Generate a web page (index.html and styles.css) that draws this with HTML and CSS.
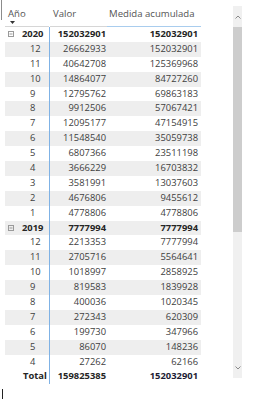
FILE: index.html
```html
<!DOCTYPE html>
<html>
<head>
<meta charset="utf-8">
<link rel="stylesheet" href="styles.css">
</head>
<body>
<div class="visual">
  <div class="edge-top"></div>
  <div class="matrix">
    <div class="head">
      <div class="c1 h"><span>Año</span><svg class="sort" width="5" height="3" viewBox="0 0 5 3"><path d="M0 0H5L2.5 3Z" fill="#333"/></svg></div>
      <div class="c2 h">Valor</div>
      <div class="c3 h hl">Medida acumulada</div>
    </div>
    <div class="body">
      <div class="row grp"><div class="c1"><svg class="exp" width="6" height="6" viewBox="0 0 6 6"><rect x="0.5" y="0.5" width="5" height="5" fill="none" stroke="#9a9a9a"/><path d="M1.5 3H4.5" stroke="#9a9a9a"/></svg>2020</div><div class="c2">152032901</div><div class="c3">152032901</div></div>
      <div class="row alt"><div class="c1 m">12</div><div class="c2">26662933</div><div class="c3">152032901</div></div>
      <div class="row"><div class="c1 m">11</div><div class="c2">40642708</div><div class="c3">125369968</div></div>
      <div class="row alt"><div class="c1 m">10</div><div class="c2">14864077</div><div class="c3">84727260</div></div>
      <div class="row"><div class="c1 m">9</div><div class="c2">12795762</div><div class="c3">69863183</div></div>
      <div class="row alt"><div class="c1 m">8</div><div class="c2">9912506</div><div class="c3">57067421</div></div>
      <div class="row"><div class="c1 m">7</div><div class="c2">12095177</div><div class="c3">47154915</div></div>
      <div class="row alt"><div class="c1 m">6</div><div class="c2">11548540</div><div class="c3">35059738</div></div>
      <div class="row"><div class="c1 m">5</div><div class="c2">6807366</div><div class="c3">23511198</div></div>
      <div class="row alt"><div class="c1 m">4</div><div class="c2">3666229</div><div class="c3">16703832</div></div>
      <div class="row"><div class="c1 m">3</div><div class="c2">3581991</div><div class="c3">13037603</div></div>
      <div class="row alt"><div class="c1 m">2</div><div class="c2">4676806</div><div class="c3">9455612</div></div>
      <div class="row"><div class="c1 m">1</div><div class="c2">4778806</div><div class="c3">4778806</div></div>
      <div class="row alt grp"><div class="c1"><svg class="exp" width="6" height="6" viewBox="0 0 6 6"><rect x="0.5" y="0.5" width="5" height="5" fill="none" stroke="#9a9a9a"/><path d="M1.5 3H4.5" stroke="#9a9a9a"/></svg>2019</div><div class="c2">7777994</div><div class="c3">7777994</div></div>
      <div class="row"><div class="c1 m">12</div><div class="c2">2213353</div><div class="c3">7777994</div></div>
      <div class="row alt"><div class="c1 m">11</div><div class="c2">2705716</div><div class="c3">5564641</div></div>
      <div class="row"><div class="c1 m">10</div><div class="c2">1018997</div><div class="c3">2858925</div></div>
      <div class="row alt"><div class="c1 m">9</div><div class="c2">819583</div><div class="c3">1839928</div></div>
      <div class="row"><div class="c1 m">8</div><div class="c2">400036</div><div class="c3">1020345</div></div>
      <div class="row alt"><div class="c1 m">7</div><div class="c2">272343</div><div class="c3">620309</div></div>
      <div class="row"><div class="c1 m">6</div><div class="c2">199730</div><div class="c3">347966</div></div>
      <div class="row alt"><div class="c1 m">5</div><div class="c2">86070</div><div class="c3">148236</div></div>
      <div class="row"><div class="c1 m">4</div><div class="c2">27262</div><div class="c3">62166</div></div>
      <div class="row grp total"><div class="c1 tl">Total</div><div class="c2">159825385</div><div class="c3 tv">152032901</div></div>
    </div>
  </div>
  <div class="scroll">
    <div class="arrow"><svg width="6" height="4" viewBox="0 0 6 4"><path d="M0.5 3.5L3 1L5.5 3.5" fill="none" stroke="#8a8a8a"/></svg></div>
    <div class="track"><div class="thumb"></div></div>
    <div class="arrow"><svg width="6" height="4" viewBox="0 0 6 4"><path d="M0.5 0.5L3 3L5.5 0.5" fill="none" stroke="#8a8a8a"/></svg></div>
  </div>
  <div class="edge-bottom"></div>
</div>
</body>
</html>
```
FILE: styles.css
```css
html, body {
  margin: 0;
  padding: 0;
  background: #ffffff;
}
.visual {
  position: relative;
  width: 256px;
  height: 399px;
  display: flex;
  font-family: "Open Sans", "Noto Sans", sans-serif;
  font-size: 9.4px;
  color: #404040;
}
.edge-top {
  position: absolute;
  left: 1px;
  top: 0;
  width: 1px;
  height: 20px;
  background: #8c8c8c;
}
.edge-bottom {
  position: absolute;
  left: 2px;
  bottom: 0;
  width: 1px;
  height: 10px;
  background: #222;
}
.matrix {
  margin-left: 5px;
  width: 196px;
  display: flex;
  flex-direction: column;
}
.head {
  display: flex;
  height: 27px;
  box-sizing: border-box;
}
.head .h {
  box-sizing: border-box;
  border-bottom: 1px solid #d6d6d6;
  color: #555;
  font-size: 9.6px;
  padding-top: 8px;
  line-height: 12px;
}
.head .hl {
  border-bottom-color: #a9cdee;
}
.head .c1 {
  padding-left: 3px;
  display: flex;
  flex-direction: column;
  align-items: flex-start;
}
.sort {
  display: block;
  margin-left: 2px;
  margin-top: 1px;
}
.c1 {
  width: 44px;
  box-sizing: border-box;
  white-space: nowrap;
}
.c2 {
  width: 58px;
  box-sizing: border-box;
  text-align: right;
  padding-right: 1px;
  border-left: 1px solid #7fb2e5;
}
.head .c2 {
  text-align: left;
  padding-left: 3px;
  border-left: none;
  margin-left: 1px;
  width: 57px;
}
.c3 {
  flex: 1;
  text-align: right;
  padding-right: 3px;
  white-space: nowrap;
}
.head .c3 {
  text-align: left;
  padding-left: 2px;
}
.row {
  display: flex;
  height: 14.9px;
  line-height: 14.9px;
}
.row.alt {
  background: #eeeeee;
}
.row .m {
  padding-left: 25px;
}
.grp {
  font-weight: bold;
  color: #252525;
}
.grp .c1 {
  display: flex;
  align-items: center;
  padding-left: 3px;
}
.exp {
  display: block;
  margin-right: 8px;
  flex: none;
}
.total .c1 {
  padding-left: 18px;
}
.tv {
  color: #1c1c34;
}
.scroll {
  margin-left: 32px;
  margin-top: 6px;
  width: 9px;
  height: 372px;
  background: #f0f0f0;
  display: flex;
  flex-direction: column;
  align-items: center;
}
.arrow {
  height: 21px;
  display: flex;
  align-items: center;
  justify-content: center;
}
.track {
  flex: 1;
  width: 9px;
}
.thumb {
  width: 9px;
  height: 205px;
  background: #cdcdcd;
}
```
